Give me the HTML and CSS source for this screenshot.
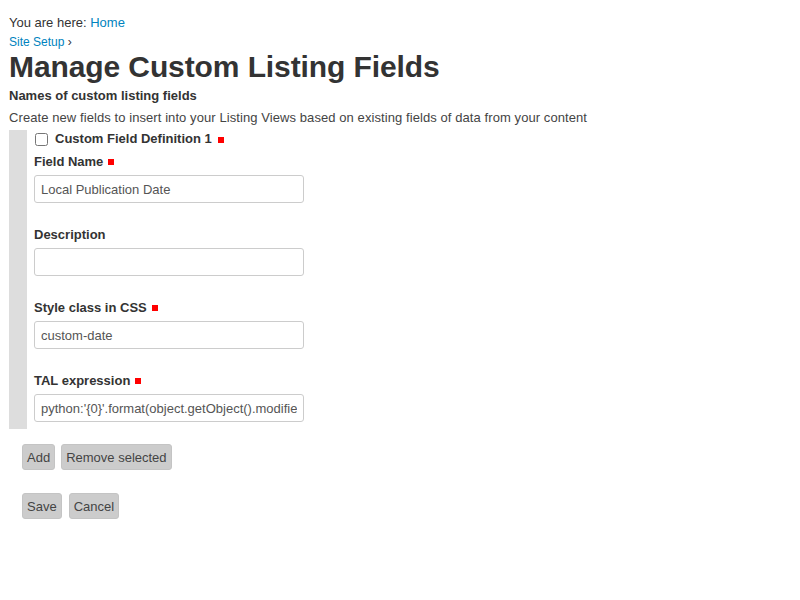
FILE: index.html
```html
<!DOCTYPE html>
<html>
<head>
<meta charset="utf-8">
<link rel="stylesheet" href="styles.css">
</head>
<body>
<div class="page">
  <div class="crumbs">You are here: <a href="#">Home</a></div>
  <div class="uplink"><a href="#">Site Setup</a> ›</div>
  <h1 class="title">Manage Custom Listing Fields</h1>
  <div class="subtitle">Names of custom listing fields</div>
  <div class="help">Create new fields to insert into your Listing Views based on existing fields of data from your content</div>
  <div class="group">
    <div class="group-head">
      <input type="checkbox" class="check">
      <span class="group-label">Custom Field Definition 1</span>
      <span class="req"></span>
    </div>
    <div class="field">
      <div class="label">Field Name<span class="req"></span></div>
      <input class="text" type="text" value="Local Publication Date">
    </div>
    <div class="field">
      <div class="label">Description</div>
      <input class="text" type="text" value="">
    </div>
    <div class="field">
      <div class="label">Style class in CSS<span class="req"></span></div>
      <input class="text" type="text" value="custom-date">
    </div>
    <div class="field last">
      <div class="label">TAL expression<span class="req"></span></div>
      <input class="text" type="text" value="python:'{0}'.format(object.getObject().modified().strftime('%d/%m/%Y'))">
    </div>
  </div>
  <div class="buttons first">
    <button class="btn">Add</button>
    <button class="btn">Remove selected</button>
  </div>
  <div class="buttons second">
    <button class="btn">Save</button>
    <button class="btn">Cancel</button>
  </div>
</div>
</body>
</html>
```
FILE: styles.css
```css
html, body {
  margin: 0;
  padding: 0;
  background: #fff;
}
body {
  font-family: "Liberation Sans", Arial, sans-serif;
  font-size: 13px;
  color: #333;
}
a {
  color: #0083be;
  text-decoration: none;
}
.page {
  padding: 14px 0 0 9px;
}
.crumbs {
  line-height: 18px;
}
.uplink {
  font-size: 12px;
  line-height: 16px;
  margin-top: 2px;
}
.title {
  font-size: 30px;
  line-height: 34px;
  font-weight: bold;
  margin: 0;
  color: #333;
  letter-spacing: -0.1px;
}
.subtitle {
  font-weight: bold;
  line-height: 18px;
  margin-top: 3px;
}
.help {
  line-height: 18px;
  margin-top: 4px;
  color: #444;
  letter-spacing: 0.08px;
}
.group {
  margin-top: 3px;
  border-left: 18px solid #ddd;
  padding: 0 0 7px 7px;
  width: 400px;
}
.group-head {
  display: flex;
  align-items: center;
  height: 18px;
}
.check {
  width: 13px;
  height: 13px;
  margin: 0 7px 0 1px;
}
.group-label {
  font-weight: bold;
  line-height: 18px;
}
.req {
  display: inline-block;
  width: 6px;
  height: 6px;
  background: #f00;
  margin-left: 5px;
  vertical-align: 1px;
}
.group-head .req {
  margin-left: 6px;
  margin-top: 2px;
}
.field {
  margin-top: 5px;
}
.field + .field {
  margin-top: 23px;
}
.label {
  font-weight: bold;
  line-height: 18px;
}
.text {
  display: block;
  box-sizing: border-box;
  width: 270px;
  height: 28px;
  margin-top: 4px;
  padding: 0 6px;
  border: 1px solid #ccc;
  border-radius: 3px;
  font-family: "Liberation Sans", Arial, sans-serif;
  font-size: 13px;
  color: #555;
  background: #fff;
}
.buttons {
  display: flex;
  margin-left: 13px;
}
.buttons.first {
  gap: 6px;
  margin-top: 15px;
}
.buttons.second {
  gap: 7px;
  margin-top: 23px;
}
.btn {
  height: 26px;
  padding: 0 4px;
  font-family: "Liberation Sans", Arial, sans-serif;
  font-size: 13px;
  color: #444;
  background: #ccc;
  border: 1px solid #c4c4c4;
  border-radius: 3px;
}
```
